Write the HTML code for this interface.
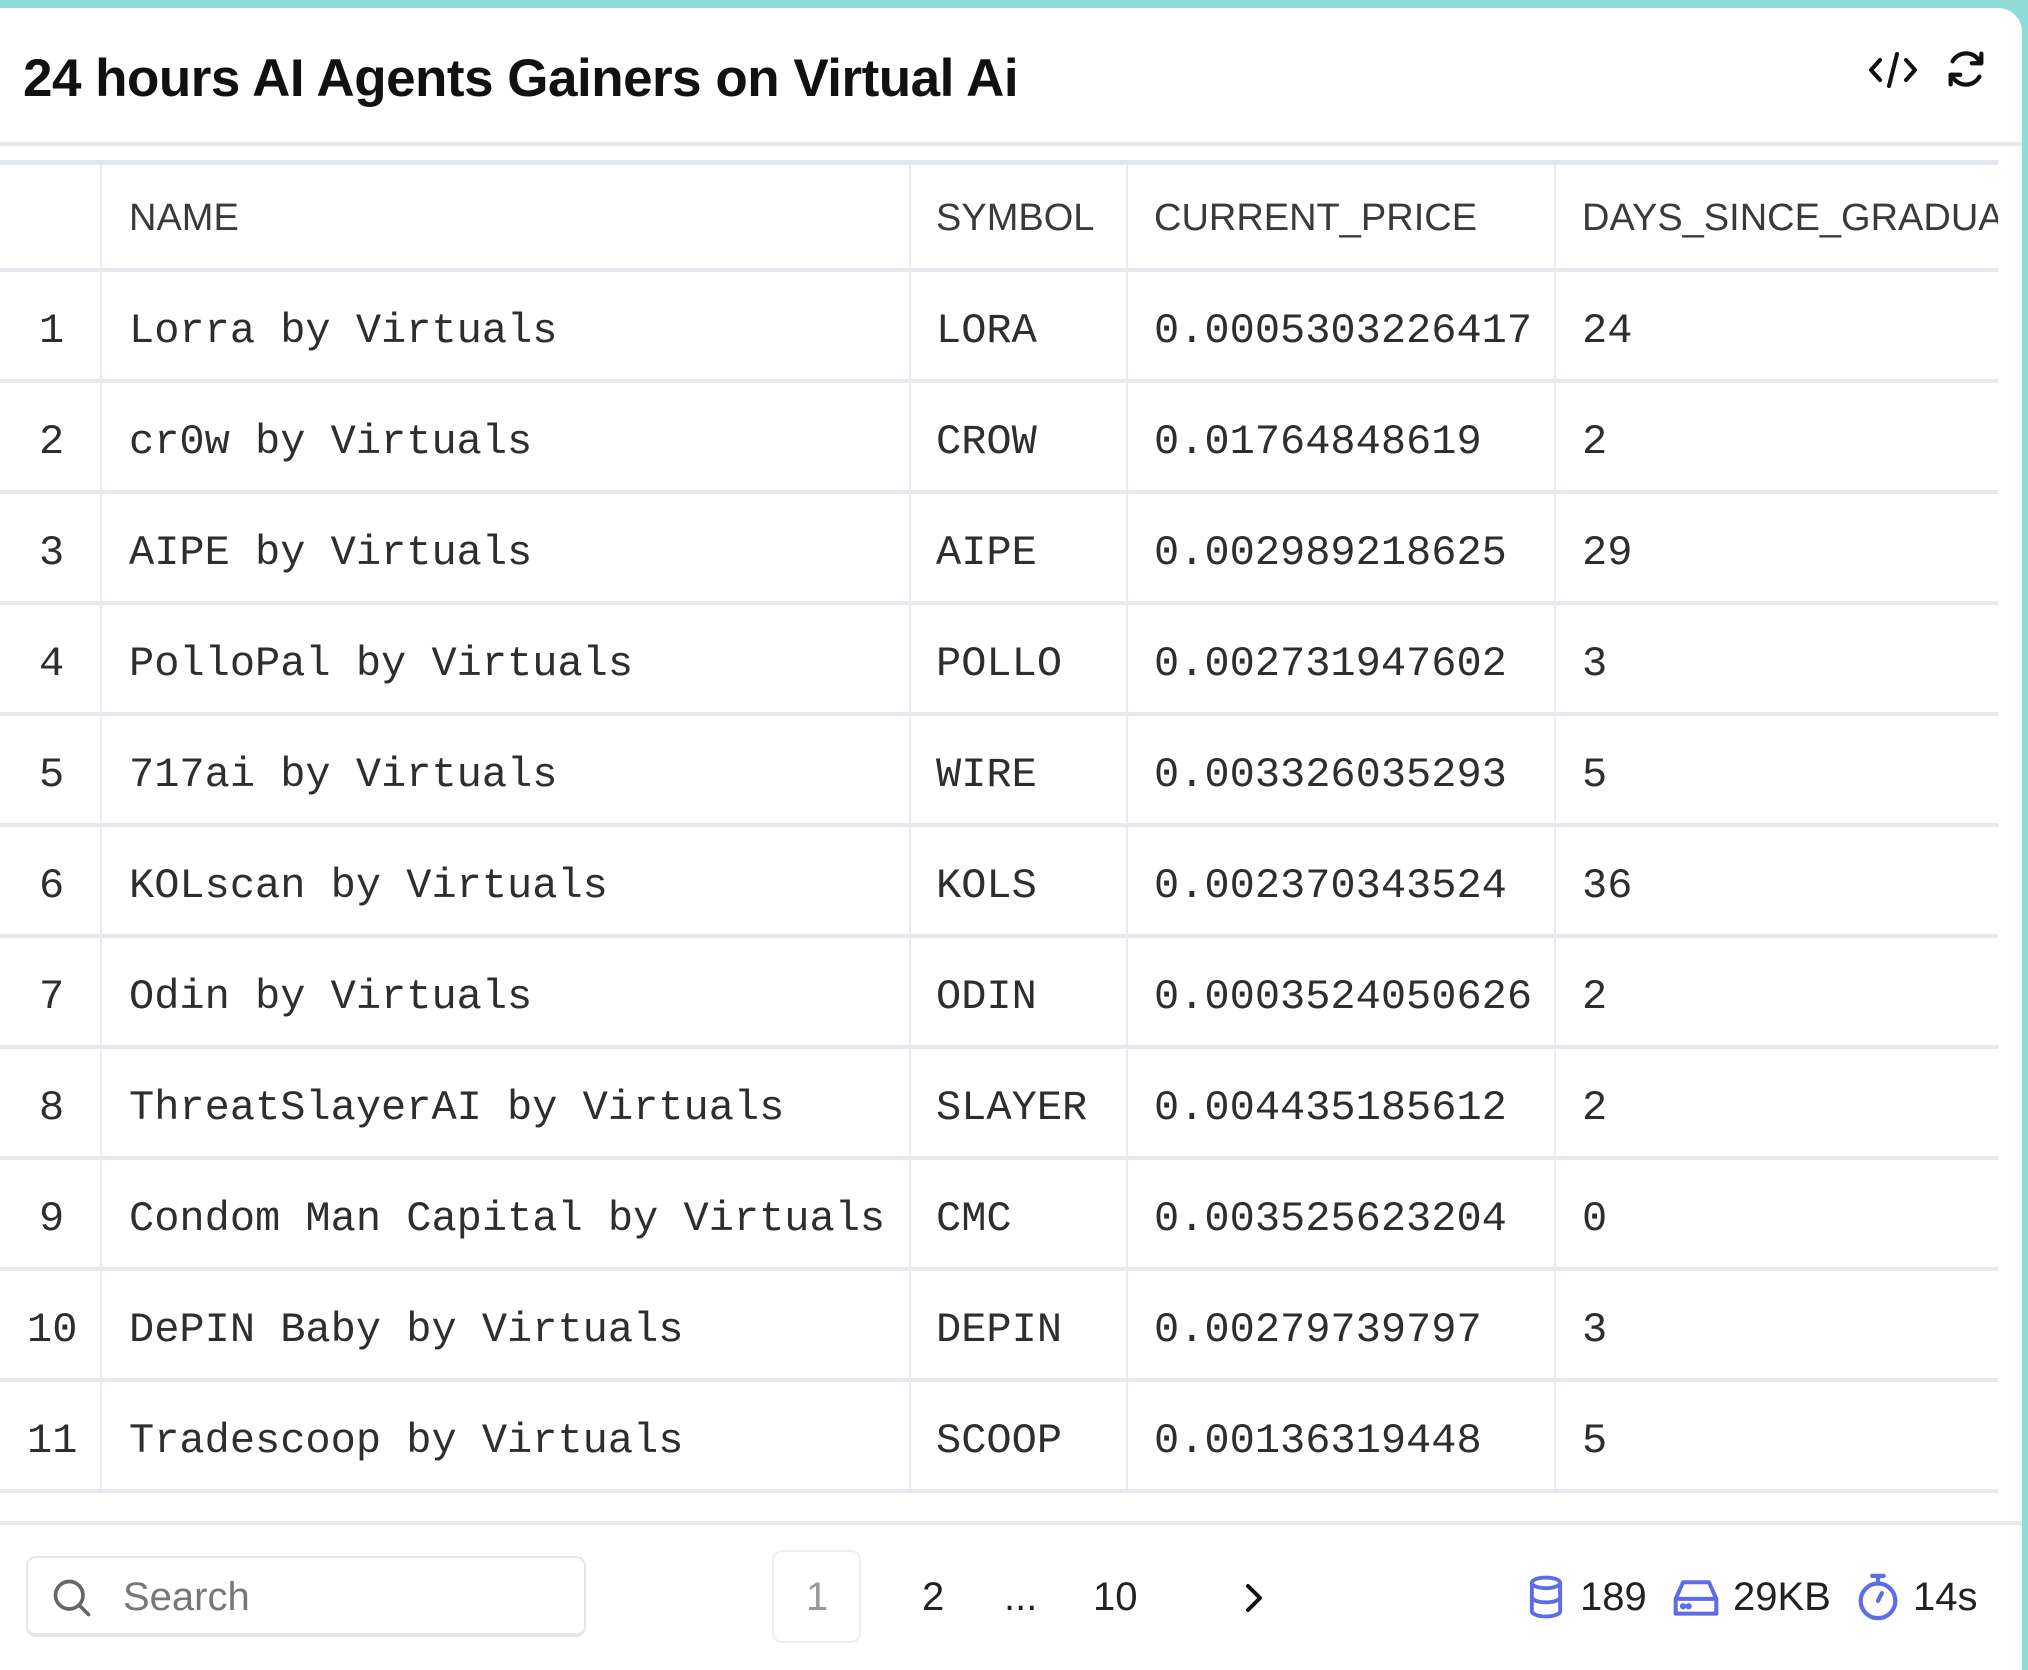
<!DOCTYPE html>
<html><head><meta charset="utf-8"><style>
*{margin:0;padding:0;box-sizing:border-box}
body{width:2028px;height:1670px;background:#8fdcd6;position:relative;overflow:hidden;font-family:"Liberation Sans",sans-serif}
.card{position:absolute;left:0;top:8px;width:2022px;height:1662px;background:#fff;border-top-right-radius:24px}
.title{position:absolute;left:23px;top:40px;font-size:53px;font-weight:bold;color:#111;letter-spacing:-0.5px}
.hl{position:absolute;left:0;width:2022px;height:4px;background:#e6eaee}
.t{position:absolute;left:0;top:160px;width:1998px;border-top:5px solid #e2e7ec}
.row{position:relative;height:111px;border-bottom:4px solid #e6eaee}
.c{position:absolute;top:0;height:100%;display:flex;align-items:center;border-right:2px solid #e8ecf0;color:#333}
.m{font-family:"Liberation Mono",monospace;font-size:42px;color:#2e2e2e;padding-top:10px}
.h{font-size:38px;color:#3a3a3a;padding-top:4px}
.ft{position:absolute;font-size:40px;color:#222}
</style></head><body>
<div class="card">
<div class="title">24 hours AI Agents Gainers on Virtual Ai</div>
<svg style="position:absolute;left:1868px;top:42px" width="50" height="40" viewBox="0 0 50 40" fill="none" stroke="#111" stroke-width="4" stroke-linecap="round" stroke-linejoin="round"><path d="M12 10 L3 20 L12 30"/><path d="M38 10 L47 20 L38 30"/><path d="M29 4 L21 36"/></svg>
<svg style="position:absolute;left:1943px;top:38px" width="46" height="46" viewBox="0 0 24 24" fill="none" stroke="#111" stroke-width="2.2" stroke-linecap="round" stroke-linejoin="round"><path d="M20 4v5h-5"/><path d="M4 20v-5h5"/><path d="M19.5 9A8 8 0 0 0 5 8"/><path d="M4.5 15A8 8 0 0 0 19 16"/></svg>
<div class="hl" style="top:134px"></div>
</div>
<div class="t">
<div class="row" style="height:107px">
<div class="c h" style="left:0;width:102px"></div>
<div class="c h" style="left:102px;width:809px;padding-left:27px">NAME</div>
<div class="c h" style="left:911px;width:217px;padding-left:25px">SYMBOL</div>
<div class="c h" style="left:1128px;width:428px;padding-left:26px">CURRENT_PRICE</div>
<div class="c h" style="left:1556px;width:442px;padding-left:26px;border-right:none;overflow:hidden;white-space:nowrap">DAYS_SINCE_GRADUATED</div>
</div>
<div class="row"><div class="c m" style="left:0;width:102px;padding-left:39px">1</div><div class="c m" style="left:102px;width:809px;padding-left:27px">Lorra by Virtuals</div><div class="c m" style="left:911px;width:217px;padding-left:25px">LORA</div><div class="c m" style="left:1128px;width:428px;padding-left:26px">0.0005303226417</div><div class="c m" style="left:1556px;width:442px;padding-left:26px;border-right:none">24</div></div>
<div class="row"><div class="c m" style="left:0;width:102px;padding-left:39px">2</div><div class="c m" style="left:102px;width:809px;padding-left:27px">cr0w by Virtuals</div><div class="c m" style="left:911px;width:217px;padding-left:25px">CROW</div><div class="c m" style="left:1128px;width:428px;padding-left:26px">0.01764848619</div><div class="c m" style="left:1556px;width:442px;padding-left:26px;border-right:none">2</div></div>
<div class="row"><div class="c m" style="left:0;width:102px;padding-left:39px">3</div><div class="c m" style="left:102px;width:809px;padding-left:27px">AIPE by Virtuals</div><div class="c m" style="left:911px;width:217px;padding-left:25px">AIPE</div><div class="c m" style="left:1128px;width:428px;padding-left:26px">0.002989218625</div><div class="c m" style="left:1556px;width:442px;padding-left:26px;border-right:none">29</div></div>
<div class="row"><div class="c m" style="left:0;width:102px;padding-left:39px">4</div><div class="c m" style="left:102px;width:809px;padding-left:27px">PolloPal by Virtuals</div><div class="c m" style="left:911px;width:217px;padding-left:25px">POLLO</div><div class="c m" style="left:1128px;width:428px;padding-left:26px">0.002731947602</div><div class="c m" style="left:1556px;width:442px;padding-left:26px;border-right:none">3</div></div>
<div class="row"><div class="c m" style="left:0;width:102px;padding-left:39px">5</div><div class="c m" style="left:102px;width:809px;padding-left:27px">717ai by Virtuals</div><div class="c m" style="left:911px;width:217px;padding-left:25px">WIRE</div><div class="c m" style="left:1128px;width:428px;padding-left:26px">0.003326035293</div><div class="c m" style="left:1556px;width:442px;padding-left:26px;border-right:none">5</div></div>
<div class="row"><div class="c m" style="left:0;width:102px;padding-left:39px">6</div><div class="c m" style="left:102px;width:809px;padding-left:27px">KOLscan by Virtuals</div><div class="c m" style="left:911px;width:217px;padding-left:25px">KOLS</div><div class="c m" style="left:1128px;width:428px;padding-left:26px">0.002370343524</div><div class="c m" style="left:1556px;width:442px;padding-left:26px;border-right:none">36</div></div>
<div class="row"><div class="c m" style="left:0;width:102px;padding-left:39px">7</div><div class="c m" style="left:102px;width:809px;padding-left:27px">Odin by Virtuals</div><div class="c m" style="left:911px;width:217px;padding-left:25px">ODIN</div><div class="c m" style="left:1128px;width:428px;padding-left:26px">0.0003524050626</div><div class="c m" style="left:1556px;width:442px;padding-left:26px;border-right:none">2</div></div>
<div class="row"><div class="c m" style="left:0;width:102px;padding-left:39px">8</div><div class="c m" style="left:102px;width:809px;padding-left:27px">ThreatSlayerAI by Virtuals</div><div class="c m" style="left:911px;width:217px;padding-left:25px">SLAYER</div><div class="c m" style="left:1128px;width:428px;padding-left:26px">0.004435185612</div><div class="c m" style="left:1556px;width:442px;padding-left:26px;border-right:none">2</div></div>
<div class="row"><div class="c m" style="left:0;width:102px;padding-left:39px">9</div><div class="c m" style="left:102px;width:809px;padding-left:27px">Condom Man Capital by Virtuals</div><div class="c m" style="left:911px;width:217px;padding-left:25px">CMC</div><div class="c m" style="left:1128px;width:428px;padding-left:26px">0.003525623204</div><div class="c m" style="left:1556px;width:442px;padding-left:26px;border-right:none">0</div></div>
<div class="row"><div class="c m" style="left:0;width:102px;padding-left:27px">10</div><div class="c m" style="left:102px;width:809px;padding-left:27px">DePIN Baby by Virtuals</div><div class="c m" style="left:911px;width:217px;padding-left:25px">DEPIN</div><div class="c m" style="left:1128px;width:428px;padding-left:26px">0.00279739797</div><div class="c m" style="left:1556px;width:442px;padding-left:26px;border-right:none">3</div></div>
<div class="row"><div class="c m" style="left:0;width:102px;padding-left:27px">11</div><div class="c m" style="left:102px;width:809px;padding-left:27px">Tradescoop by Virtuals</div><div class="c m" style="left:911px;width:217px;padding-left:25px">SCOOP</div><div class="c m" style="left:1128px;width:428px;padding-left:26px">0.00136319448</div><div class="c m" style="left:1556px;width:442px;padding-left:26px;border-right:none">5</div></div>
</div>
<div class="hl" style="top:1521px"></div>
<div style="position:absolute;left:26px;top:1556px;width:560px;height:81px;border:2px solid #e3e7eb;border-bottom-width:4px;border-radius:10px"></div>
<svg style="position:absolute;left:50px;top:1576px" width="44" height="44" viewBox="0 0 24 24" fill="none" stroke="#666" stroke-width="2" stroke-linecap="round"><circle cx="10.5" cy="10.5" r="7.5"/><path d="M16 16l5 5"/></svg>
<div class="ft" style="left:123px;top:1575px;color:#777">Search</div>
<div style="position:absolute;left:772px;top:1550px;width:89px;height:93px;border:2px solid #eceff2;border-radius:10px"></div>
<div class="ft" style="left:806px;top:1575px;color:#999">1</div>
<div class="ft" style="left:922px;top:1575px">2</div>
<div class="ft" style="left:1004px;top:1575px">...</div>
<div class="ft" style="left:1093px;top:1575px">10</div>
<svg style="position:absolute;left:1242px;top:1580px" width="24" height="36" viewBox="0 0 24 36" fill="none" stroke="#111" stroke-width="4" stroke-linecap="round" stroke-linejoin="round"><path d="M6 6l12 12L6 30"/></svg>
<svg style="position:absolute;left:1524px;top:1574px" width="44" height="46" viewBox="0 0 24 26" fill="none" stroke="#5b6ee8" stroke-width="2.2"><ellipse cx="12" cy="5" rx="8" ry="3"/><path d="M4 5v16c0 1.7 3.6 3 8 3s8-1.3 8-3V5"/><path d="M4 13c0 1.7 3.6 3 8 3s8-1.3 8-3"/></svg>
<div class="ft" style="left:1580px;top:1575px">189</div>
<svg style="position:absolute;left:1672px;top:1576px" width="48" height="42" viewBox="0 0 26 22" fill="none" stroke="#5b6ee8" stroke-width="2.2" stroke-linejoin="round"><path d="M6 3h14l4 9v8H2v-8z"/><path d="M2 12h22"/><circle cx="6" cy="16" r=".6" fill="#5b6ee8"/><circle cx="9" cy="16" r=".6" fill="#5b6ee8"/></svg>
<div class="ft" style="left:1733px;top:1575px">29KB</div>
<svg style="position:absolute;left:1856px;top:1572px" width="44" height="50" viewBox="0 0 22 26" fill="none" stroke="#5b6ee8" stroke-width="2.2" stroke-linecap="round"><path d="M8 2h6M11 2v4"/><circle cx="11" cy="15" r="9"/><path d="M11 15l2-4"/></svg>
<div class="ft" style="left:1913px;top:1575px">14s</div>
</body></html>
